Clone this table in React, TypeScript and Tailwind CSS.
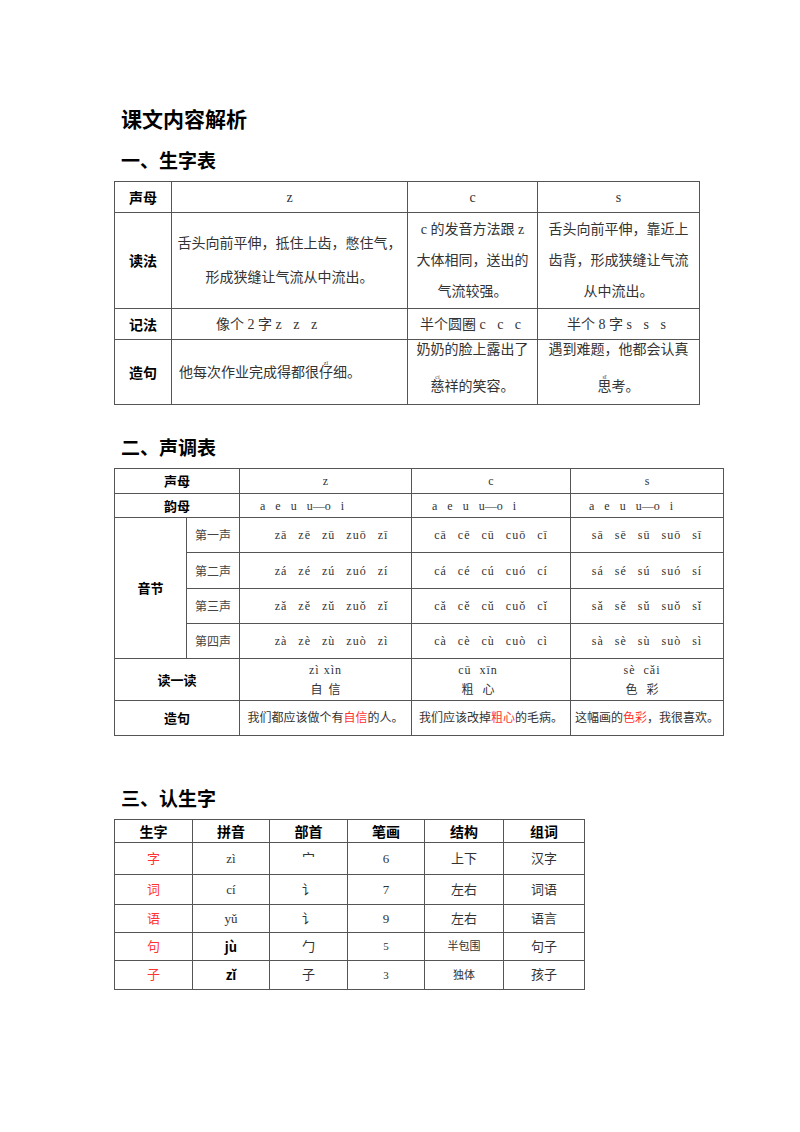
import React from 'react';

const sans = "font-['Noto_Sans_CJK_SC',sans-serif]";
const serif = "font-['Liberation_Serif','Noto_Sans_CJK_SC',serif]";
const cell = 'border border-[#555] p-0 text-center align-middle';
const head = `${cell} ${sans} font-bold text-black`;
const body = `${cell} ${serif} text-[#333]`;

// 小号拼音注音
const Py: React.FC<{ py: string; ch: string }> = ({ py, ch }) => (
  <span className="relative">
    {ch}
    <span className="absolute left-1/2 -translate-x-1/2 -top-[5px] text-[6px] leading-none text-[#444]">{py}</span>
  </span>
);

const Red: React.FC<{ children: React.ReactNode }> = ({ children }) => (
  <span className="text-[#f33]">{children}</span>
);

const tones = [
  { name: '第一声', z: ['zā', 'zē', 'zū', 'zuō', 'zī'], c: ['cā', 'cē', 'cū', 'cuō', 'cī'], s: ['sā', 'sē', 'sū', 'suō', 'sī'] },
  { name: '第二声', z: ['zá', 'zé', 'zú', 'zuó', 'zí'], c: ['cá', 'cé', 'cú', 'cuó', 'cí'], s: ['sá', 'sé', 'sú', 'suó', 'sí'] },
  { name: '第三声', z: ['zǎ', 'zě', 'zǔ', 'zuǒ', 'zǐ'], c: ['cǎ', 'cě', 'cǔ', 'cuǒ', 'cǐ'], s: ['sǎ', 'sě', 'sǔ', 'suǒ', 'sǐ'] },
  { name: '第四声', z: ['zà', 'zè', 'zù', 'zuò', 'zì'], c: ['cà', 'cè', 'cù', 'cuò', 'cì'], s: ['sà', 'sè', 'sù', 'suò', 'sì'] },
];

const Syllables: React.FC<{ items: string[]; className?: string }> = ({ items, className = '' }) => (
  <div className={`flex justify-center gap-[11px] tracking-[1px] ${className}`}>
    {items.map((s, i) => (
      <span key={i}>{s}</span>
    ))}
  </div>
);

const Finals: React.FC = () => (
  <div className="flex gap-[10px]">
    <span>a</span>
    <span>e</span>
    <span>u</span>
    <span>u—o</span>
    <span>i</span>
  </div>
);

const chars = [
  { ch: '字', py: 'zì', bold: false, bu: '宀', bh: '6', jg: '上下', zc: '汉字', small: false },
  { ch: '词', py: 'cí', bold: false, bu: '讠', bh: '7', jg: '左右', zc: '词语', small: false },
  { ch: '语', py: 'yǔ', bold: false, bu: '讠', bh: '9', jg: '左右', zc: '语言', small: false },
  { ch: '句', py: 'jù', bold: true, bu: '勹', bh: '5', jg: '半包围', zc: '句子', small: true },
  { ch: '子', py: 'zǐ', bold: true, bu: '子', bh: '3', jg: '独体', zc: '孩子', small: true },
];

const rowHeights = ['h-[32px]', 'h-[30px]', 'h-[28px]', 'h-[28px]', 'h-[29px]'];

export default function App() {
  return (
    <div className={`min-h-[1132px] w-[800px] bg-white pl-[114px] pt-[107px] ${sans}`}>
      <h1 className="ml-[7px] text-[21px] font-bold leading-[22px] text-black">课文内容解析</h1>

      <h2 className="ml-[7px] mt-[21px] text-[19px] font-bold leading-[20px] text-black">一、生字表</h2>
      <table className="mt-[11px] w-[585px] table-fixed border-collapse text-[14px]">
        <colgroup>
          <col className="w-[57px]" />
          <col className="w-[236px]" />
          <col className="w-[130px]" />
          <col className="w-[162px]" />
        </colgroup>
        <tbody>
          <tr className="h-[31px]">
            <th className={head}>声母</th>
            <td className={body}>z</td>
            <td className={body}>c</td>
            <td className={body}>s</td>
          </tr>
          <tr className="h-[96px]">
            <th className={head}>读法</th>
            <td className={`${body} leading-[34px]`}>
              舌头向前平伸，抵住上齿，憋住气，
              <br />
              形成狭缝让气流从中流出。
            </td>
            <td className={`${body} leading-[31px]`}>
              c 的发音方法跟 z
              <br />
              大体相同，送出的
              <br />
              气流较强。
            </td>
            <td className={`${body} leading-[31px]`}>
              舌头向前平伸，靠近上
              <br />
              齿背，形成狭缝让气流
              <br />
              从中流出。
            </td>
          </tr>
          <tr className="h-[31px]">
            <th className={head}>记法</th>
            <td className={`${body} pl-[44px] text-left`}>
              像个 2 字 <span className="tracking-[4px]">z z z</span>
            </td>
            <td className={body}>
              半个圆圈 <span className="tracking-[4px]">c c c</span>
            </td>
            <td className={body}>
              半个 8 字 <span className="tracking-[4px]">s s s</span>
            </td>
          </tr>
          <tr className="h-[65px]">
            <th className={head}>造句</th>
            <td className={`${body} pl-[7px] text-left`}>
              他每次作业完成得都很<Py py="zǐ" ch="仔" />细。
            </td>
            <td className={`${body} align-top`}>
              <div className="leading-[20px]">奶奶的脸上露出了</div>
              <div className="mt-[17px] leading-[20px]">
                <Py py="cí" ch="慈" />祥的笑容。
              </div>
            </td>
            <td className={`${body} align-top`}>
              <div className="leading-[20px]">遇到难题，他都会认真</div>
              <div className="mt-[17px] leading-[20px]">
                <Py py="sī" ch="思" />考。
              </div>
            </td>
          </tr>
        </tbody>
      </table>

      <h2 className="ml-[7px] mt-[32px] text-[19px] font-bold leading-[20px] text-black">二、声调表</h2>
      <table className="mt-[11px] w-[609px] table-fixed border-collapse text-[12px]">
        <colgroup>
          <col className="w-[72px]" />
          <col className="w-[53px]" />
          <col className="w-[172px]" />
          <col className="w-[159px]" />
          <col className="w-[153px]" />
        </colgroup>
        <tbody>
          <tr className="h-[25px]">
            <th colSpan={2} className={`${head} text-[13px]`}>声母</th>
            <td className={body}>z</td>
            <td className={body}>c</td>
            <td className={body}>s</td>
          </tr>
          <tr className="h-[24px]">
            <th colSpan={2} className={`${head} text-[13px]`}>韵母</th>
            <td className={`${body} pl-[20px] text-left`}><Finals /></td>
            <td className={`${body} pl-[20px] text-left`}><Finals /></td>
            <td className={`${body} pl-[18px] text-left`}><Finals /></td>
          </tr>
          {tones.map((t, i) => (
            <tr key={t.name} className={i === 1 ? 'h-[36px]' : 'h-[35px]'}>
              {i === 0 && (
                <th rowSpan={4} className={`${head} text-[13px]`}>音节</th>
              )}
              <td className={`${cell} ${sans} text-[#444]`}>{t.name}</td>
              <td className={body}><Syllables items={t.z} className="pl-[12px]" /></td>
              <td className={body}><Syllables items={t.c} /></td>
              <td className={body}><Syllables items={t.s} /></td>
            </tr>
          ))}
          <tr className="h-[42px]">
            <th colSpan={2} className={`${head} text-[13px]`}>读一读</th>
            <td className={`${body} leading-[20px]`}>
              <div className="tracking-[1px]">zì xìn</div>
              <div>自&nbsp;&nbsp;信</div>
            </td>
            <td className={`${body} pr-[26px] leading-[20px]`}>
              <div className="tracking-[1px]">cū&nbsp;&nbsp;xīn</div>
              <div>粗&nbsp;&nbsp;&nbsp;心</div>
            </td>
            <td className={`${body} pr-[10px] leading-[20px]`}>
              <div className="tracking-[1px]">sè&nbsp;&nbsp;cǎi</div>
              <div>色&nbsp;&nbsp;&nbsp;彩</div>
            </td>
          </tr>
          <tr className="h-[35px]">
            <th colSpan={2} className={`${head} text-[13px]`}>造句</th>
            <td className={body}>我们都应该做个有<Red>自信</Red>的人。</td>
            <td className={body}>我们应该改掉<Red>粗心</Red>的毛病。</td>
            <td className={body}>这幅画的<Red>色彩</Red>，我很喜欢。</td>
          </tr>
        </tbody>
      </table>

      <h2 className="ml-[7px] mt-[52px] text-[19px] font-bold leading-[20px] text-black">三、认生字</h2>
      <table className="mt-[11px] w-[470px] table-fixed border-collapse text-[13px]">
        <colgroup>
          <col className="w-[78px]" />
          <col className="w-[77px]" />
          <col className="w-[78px]" />
          <col className="w-[77px]" />
          <col className="w-[79px]" />
          <col className="w-[81px]" />
        </colgroup>
        <tbody>
          <tr className="h-[23px]">
            {['生字', '拼音', '部首', '笔画', '结构', '组词'].map((h) => (
              <th key={h} className={`${head} text-[14px]`}>{h}</th>
            ))}
          </tr>
          {chars.map((c, i) => (
            <tr key={c.ch} className={rowHeights[i]}>
              <td className={`${cell} ${serif} text-[#f33]`}>{c.ch}</td>
              <td className={c.bold ? `${cell} ${sans} font-bold text-black` : body}>{c.py}</td>
              <td className={body}>{c.bu}</td>
              <td className={`${body} ${c.small ? 'text-[11px]' : ''}`}>{c.bh}</td>
              <td className={`${body} ${c.small ? 'text-[11px]' : ''}`}>{c.jg}</td>
              <td className={body}>{c.zc}</td>
            </tr>
          ))}
        </tbody>
      </table>
    </div>
  );
}
